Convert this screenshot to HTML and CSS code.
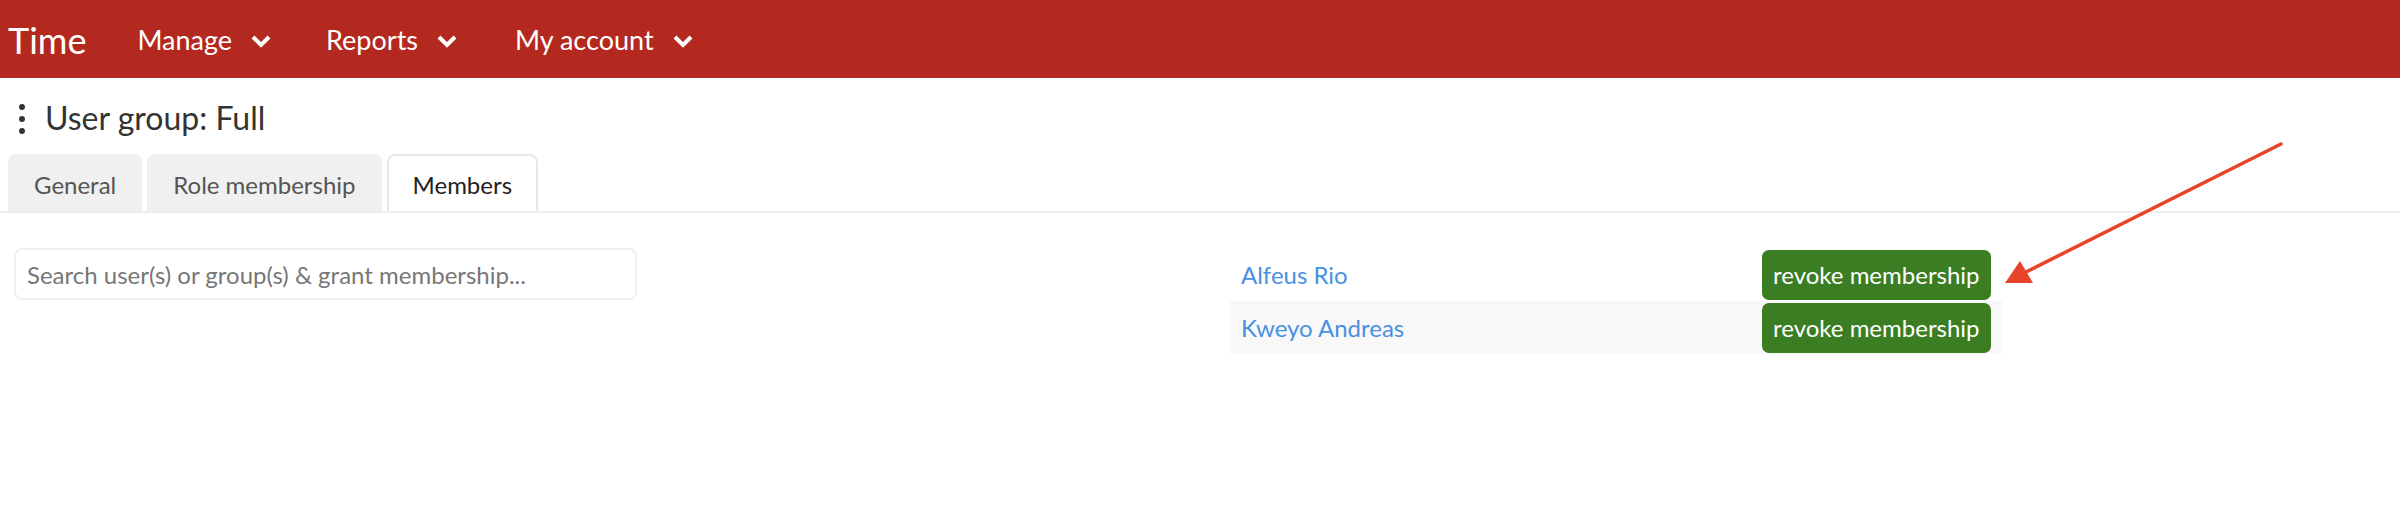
FILE: index.html
```html
<!DOCTYPE html>
<html>
<head>
    <title>User group: Full</title>
    <link rel="stylesheet" href="styles.css">
</head>
<body>
    <div class="topbar">
        <div class="brand">Time</div>
        <div class="nav-item">Manage
            <svg class="chevron" width="22" height="14" viewBox="0 0 22 14"><path d="M3 3 L11 11 L19 3" /></svg>
        </div>
        <div class="nav-item">Reports
            <svg class="chevron" width="22" height="14" viewBox="0 0 22 14"><path d="M3 3 L11 11 L19 3" /></svg>
        </div>
        <div class="nav-item">My account
            <svg class="chevron" width="22" height="14" viewBox="0 0 22 14"><path d="M3 3 L11 11 L19 3" /></svg>
        </div>
    </div>

    <div class="page-title">
        <div class="kebab"><span></span><span></span><span></span></div>
        <h1>User group: Full</h1>
    </div>

    <div class="tabs">
        <div class="tab">General</div>
        <div class="tab">Role membership</div>
        <div class="tab tab-active">Members</div>
    </div>

    <div class="members">
        <div class="search-col">
            <input class="search" type="text" placeholder="Search user(s) or group(s) &amp; grant membership..." autofocus>
        </div>
        <table class="member-list">
            <tr>
                <td class="member-name"><a href="#">Alfeus Rio</a></td>
                <td class="member-action"><button class="revoke">revoke membership</button></td>
            </tr>
            <tr>
                <td class="member-name"><a href="#">Kweyo Andreas</a></td>
                <td class="member-action"><button class="revoke">revoke membership</button></td>
            </tr>
        </table>
    </div>

    <!-- annotation arrow drawn over the screenshot -->
    <svg class="annotation" width="2400" height="520" viewBox="0 0 2400 520">
        <line x1="2281" y1="144" x2="2024" y2="273" />
        <polygon points="2005,283 2020,261 2033,283" />
    </svg>
</body>
</html>
```

FILE: styles.css
```css
body {
    margin: 0;
    font-family: Lato, "Open Sans", sans-serif;
    color: #333;
    background-color: #ffffff;
}
.topbar {
    display: flex;
    align-items: center;
    height: 78px;
    padding-left: 8px;
    background-color: #b3291f;
    color: #ffffff;
}
.brand {
    font-size: 36px;
    margin-right: 25px;
    margin-top: 2px;
}
.nav-item {
    display: flex;
    align-items: center;
    gap: 18px;
    padding: 0 26px;
    font-size: 27px;
}
.nav-item:nth-child(3) {
    padding-left: 28px;
}
.nav-item:last-child {
    padding-left: 31px;
}
.chevron {
    fill: none;
    stroke: #ffffff;
    stroke-width: 4;
    margin-top: 3px;
}
.page-title {
    display: flex;
    align-items: center;
    gap: 20px;
    padding: 4px 0 0 19px;
    height: 72px;
}
.kebab {
    display: flex;
    flex-direction: column;
    gap: 6px;
    margin-top: 2px;
}
.kebab span {
    width: 6px;
    height: 6px;
    border-radius: 50%;
    background-color: #333;
}
.page-title h1 {
    margin: 0;
    font-size: 32px;
    font-weight: 400;
    line-height: 38px;
    color: #333;
}
.tabs {
    display: flex;
    gap: 5px;
    padding-left: 8px;
    border-bottom: 2px solid #eeeeee;
}
.tab {
    height: 55px;
    line-height: 57px;
    padding: 0 24px;
    font-size: 24px;
    color: #555;
    background-color: #f0f0f0;
    border: 2px solid #f0f0f0;
    border-bottom: none;
    border-radius: 8px 8px 0 0;
}
.tab-active {
    background-color: #ffffff;
    border-color: #e8e8e8;
    color: #222;
}
.members {
    display: grid;
    grid-template-columns: 1216px 772px;
    padding: 35px 0 0 14px;
    align-items: start;
}
.search {
    box-sizing: border-box;
    width: 623px;
    height: 52px;
    padding: 0 11px;
    font-family: Lato, sans-serif;
    font-size: 24px;
    color: #333;
    border: 2px solid #efefef;
    border-radius: 8px;
    outline: none;
    caret-color: #222;
}
.search::placeholder {
    color: #777;
}
.member-list {
    width: 772px;
    border-collapse: collapse;
    table-layout: fixed;
}
.member-list tr:nth-child(even) {
    background-color: #f8f8f8;
}
.member-list td {
    height: 53px;
    padding: 0;
    vertical-align: middle;
}
.member-name {
    width: 521px;
    padding-left: 11px !important;
    font-size: 24px;
}
.member-name a {
    color: #4a90e2;
    text-decoration: none;
}
.member-action {
    padding-right: 13px !important;
}
.revoke {
    display: block;
    height: 50px;
    padding: 0 11px;
    white-space: nowrap;
    font-family: Lato, sans-serif;
    font-size: 24px;
    line-height: 50px;
    color: #ffffff;
    background-color: #3a7d23;
    border: none;
    border-radius: 7px;
}
.annotation {
    position: absolute;
    left: 0;
    top: 0;
    pointer-events: none;
}
.annotation line {
    stroke: #e8432b;
    stroke-width: 3.5;
    stroke-linecap: round;
}
.annotation polygon {
    fill: #e8432b;
}
```
